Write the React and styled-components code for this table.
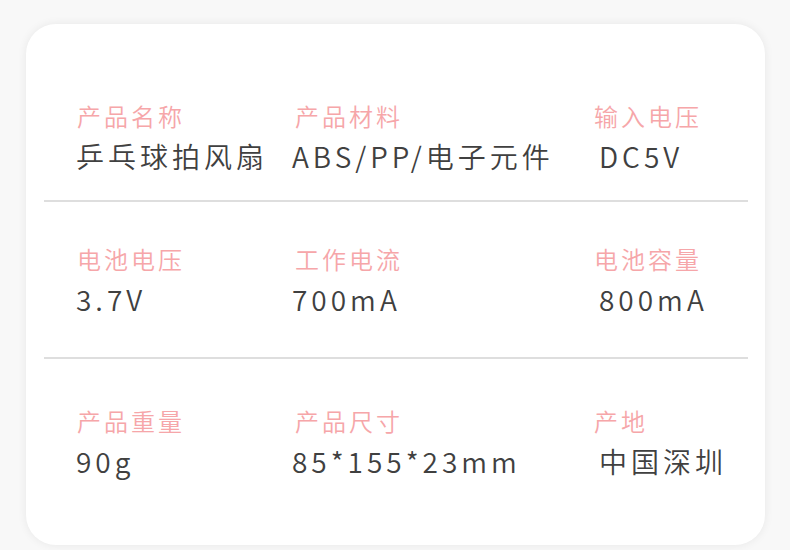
import React from 'react';
import styled, { createGlobalStyle } from 'styled-components';

const GlobalStyle = createGlobalStyle`
  html, body {
    margin: 0;
    padding: 0;
    background: #f8f8f8;
  }
  body {
    font-family: "Noto Sans CJK SC", "Noto Sans", sans-serif;
  }
`;

const Page = styled.div`
  width: 790px;
  height: 550px;
  padding: 24px 25px 5px 26px;
  box-sizing: border-box;
  overflow: hidden;
`;

const Card = styled.div`
  height: 100%;
  background: #fff;
  border-radius: 30px;
  box-shadow: 0 0 10px rgba(0, 0, 0, 0.07);
  padding: 0 17px 0 18px;
  box-sizing: border-box;
  display: flex;
  flex-direction: column;
`;

const Row = styled.div`
  display: grid;
  grid-template-columns: 218px 299px 1fr;
  padding-left: 33px;
  padding-top: ${p => p.top}px;
  height: ${p => p.height}px;
  box-sizing: border-box;
`;

const Divider = styled.div`
  height: 2px;
  background: #dedede;
`;

const Cell = styled.div`
  display: flex;
  flex-direction: column;
`;

const Label = styled.span`
  font-size: 24px;
  font-weight: 350;
  line-height: 1;
  letter-spacing: 3px;
  color: #f6a6a9;
`;

const Value = styled.span`
  margin-top: 14px;
  margin-left: ${p => p.shift || 0}px;
  font-size: 28px;
  font-weight: 350;
  line-height: 1;
  letter-spacing: 4px;
  color: #404040;
  white-space: nowrap;
`;

const shifts = [-1, -3, 5];

const rows = [
  {
    top: 80,
    height: 176,
    items: [
      ['产品名称', '乒乓球拍风扇'],
      ['产品材料', 'ABS/PP/电子元件'],
      ['输入电压', 'DC5V'],
    ],
  },
  {
    top: 45,
    height: 155,
    items: [
      ['电池电压', '3.7V'],
      ['工作电流', '700mA'],
      ['电池容量', '800mA'],
    ],
  },
  {
    top: 50,
    height: 186,
    items: [
      ['产品重量', '90g'],
      ['产品尺寸', '85*155*23mm'],
      ['产地', '中国深圳'],
    ],
  },
];

const App = () => {
  return (
    <React.Fragment>
      <GlobalStyle />
      <Page>
        <Card>
          {rows.map((row, i) => (
            <React.Fragment key={i}>
              <Row top={row.top} height={row.height}>
                {row.items.map(([label, value], j) => (
                  <Cell key={label}>
                    <Label>{label}</Label>
                    <Value shift={shifts[j]}>{value}</Value>
                  </Cell>
                ))}
              </Row>
              {i < rows.length - 1 && <Divider />}
            </React.Fragment>
          ))}
        </Card>
      </Page>
    </React.Fragment>
  );
};

export default App;
